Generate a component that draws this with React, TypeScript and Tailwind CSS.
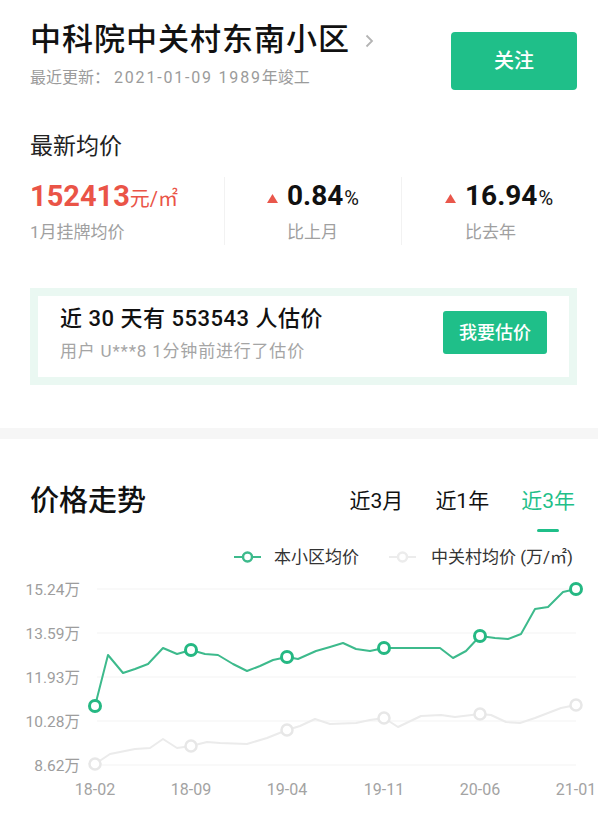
import React from 'react';

const green = '#1fbf89';

// 本小区均价, page coords
const clubPts: [number, number][] = [
  [95, 705], [108, 654], [123, 672], [135, 668], [148, 663], [163, 647], [177, 653], [191, 649],
  [205, 653], [218, 654], [233, 663], [247, 670], [260, 665], [273, 659], [287, 656], [298, 658],
  [316, 650], [330, 646], [343, 642], [356, 648], [370, 650], [384, 647], [398, 647], [412, 647],
  [426, 647], [440, 647], [453, 657], [466, 650], [480, 635], [495, 637], [508, 638], [521, 633],
  [535, 608], [548, 606], [563, 591], [576, 588],
];

// 中关村均价
const areaPts: [number, number][] = [
  [95, 763], [110, 753], [135, 748], [150, 747], [163, 738], [177, 747], [191, 745], [207, 741],
  [220, 742], [247, 743], [267, 737], [287, 729], [300, 725], [315, 718], [330, 723], [356, 722],
  [370, 719], [384, 717], [398, 726], [421, 715], [441, 714], [455, 716], [480, 713], [491, 714],
  [506, 721], [520, 722], [535, 717], [561, 707], [576, 704],
];

const marks = [95, 191, 287, 384, 480, 576];
const yTicks = [
  { y: 588, label: '15.24万' },
  { y: 632, label: '13.59万' },
  { y: 676, label: '11.93万' },
  { y: 720, label: '10.28万' },
  { y: 764, label: '8.62万' },
];
const xTicks = ['18-02', '18-09', '19-04', '19-11', '20-06', '21-01'];

const pick = (pts: [number, number][]) => marks.map((x) => pts.find((p) => p[0] === x)!);

const Triangle: React.FC = () => (
  <svg width="11" height="9" viewBox="0 0 11 9" className="mt-[15px] mr-[9px] shrink-0">
    <polygon points="5.5,0 11,9 0,9" fill="#e9574b" />
  </svg>
);

const LegendIcon: React.FC<{ color: string }> = ({ color }) => (
  <svg width="27" height="12" viewBox="0 0 27 12" className="block">
    <line x1="0" y1="6" x2="27" y2="6" stroke={color} strokeWidth="2" />
    <circle cx="13.5" cy="6" r="4.5" fill="#fff" stroke={color} strokeWidth="2.5" />
  </svg>
);

const PriceChart: React.FC = () => (
  <svg width="598" height="248" viewBox="0 570 598 248" className="block">
    {yTicks.map((t) => (
      <g key={t.label}>
        <line x1="97" y1={t.y} x2="576" y2={t.y} stroke="#f3f3f3" strokeWidth="1" />
        <text x="80" y={t.y + 6} textAnchor="end" fontSize="15.5" fill="#9d9d9d">
          {t.label}
        </text>
      </g>
    ))}
    {xTicks.map((t, i) => (
      <text key={t} x={marks[i]} y={794} textAnchor="middle" fontSize="16" fill="#a3a3a3">
        {t}
      </text>
    ))}
    <polyline
      points={areaPts.map((p) => p.join(',')).join(' ')}
      fill="none"
      stroke="#ebebeb"
      strokeWidth="2"
      strokeLinejoin="round"
    />
    {pick(areaPts).map(([x, y]) => (
      <circle key={x} cx={x} cy={y} r="5.5" fill="#fff" stroke="#e7e7e7" strokeWidth="2.5" />
    ))}
    <polyline
      points={clubPts.map((p) => p.join(',')).join(' ')}
      fill="none"
      stroke="#3dba8c"
      strokeWidth="2"
      strokeLinejoin="round"
    />
    {pick(clubPts).map(([x, y]) => (
      <circle key={x} cx={x} cy={y} r="5.5" fill="#fff" stroke="#25b883" strokeWidth="3" />
    ))}
  </svg>
);

export default function App() {
  return (
    <div className="w-[598px] h-[818px] overflow-hidden bg-white text-[#111] font-['Roboto','Noto_Sans_CJK_SC',sans-serif]">
      <section className="pl-[30px] pr-[21px] pt-[22px]">
        <div className="flex items-start justify-between">
          <div>
            <div className="flex h-[36px] items-center">
              <h1 className="text-[31px] leading-[36px] font-medium tracking-[1px]">中科院中关村东南小区</h1>
              <svg width="9" height="14" viewBox="0 0 9 14" className="ml-[15px] mt-[1px]">
                <polyline points="1.5,1.5 7,7 1.5,12.5" fill="none" stroke="#b4b4b4" strokeWidth="1.8" />
              </svg>
            </div>
            <p className="mt-[9px] text-[16px] leading-[22px] text-[#9b9b9b]">
              最近更新：<span className="ml-[4px] tracking-[1.8px]">2021-01-09 1989</span>年竣工
            </p>
          </div>
          <button
            type="button"
            className="mt-[10px] h-[58px] w-[126px] rounded-[4px] text-[20px] font-medium text-white"
            style={{ backgroundColor: green }}
          >
            关注
          </button>
        </div>

        <h2 className="mt-[42px] text-[23px] leading-[30px] text-[#222]">最新均价</h2>

        <div className="mt-[15px] flex">
          <div className="w-[194px] pt-[2px]">
            <div className="flex h-[34px] items-baseline text-[#ea5447]">
              <span className="text-[29px] font-bold leading-[34px]">152413</span>
              <span className="text-[20px] leading-[34px]">元/㎡</span>
            </div>
            <p className="mt-[7px] text-[17px] leading-[24px] text-[#a0a0a0]">1月挂牌均价</p>
          </div>
          <div className="w-[177px] border-l border-[#f2f2f2] pl-[42px] pt-[2px] pb-[1px]">
            <div className="flex h-[34px] items-start">
              <Triangle />
              <span className="text-[28px] font-bold leading-[34px]">0.84</span>
              <span className="ml-[1px] mt-[5px] text-[20px] leading-[28px]">%</span>
            </div>
            <p className="ml-[20px] mt-[7px] text-[17px] leading-[24px] text-[#a0a0a0]">比上月</p>
          </div>
          <div className="flex-1 border-l border-[#f2f2f2] pl-[43px] pt-[2px] pb-[1px]">
            <div className="flex h-[34px] items-start">
              <Triangle />
              <span className="text-[28px] font-bold leading-[34px]">16.94</span>
              <span className="ml-[1px] mt-[5px] text-[20px] leading-[28px]">%</span>
            </div>
            <p className="ml-[20px] mt-[7px] text-[17px] leading-[24px] text-[#a0a0a0]">比去年</p>
          </div>
        </div>

        <div className="mt-[43px] h-[97px] border-[8px] border-[#eaf8f2] bg-white">
          <div className="flex items-start justify-between pl-[22px] pr-[22px]">
            <div className="pt-[8px]">
              <p className="text-[22px] font-medium leading-[30px] tracking-[0.5px]">近 30 天有 553543 人估价</p>
              <p className="mt-[6px] text-[17px] leading-[22px] tracking-[0.8px] text-[#a5a5a5]">用户 U***8 1分钟前进行了估价</p>
            </div>
            <button
              type="button"
              className="mt-[15px] h-[43px] w-[104px] rounded-[3px] text-[18px] font-medium text-white"
              style={{ backgroundColor: green }}
            >
              我要估价
            </button>
          </div>
        </div>
      </section>

      <div className="mt-[43px] h-[11px] bg-[#f6f6f6]" />

      <section>
        <div className="mt-[44px] flex h-[36px] items-center justify-between pl-[30px] pr-[23px]">
          <h2 className="text-[29px] font-medium leading-[36px]">价格走势</h2>
          <div className="flex items-start gap-[32px] text-[21px] leading-[36px]">
            <span>近3月</span>
            <span>近1年</span>
            <span className="relative" style={{ color: green }}>
              近3年
              <span className="absolute left-1/2 top-[46px] h-[3px] w-[22px] -translate-x-1/2 rounded-full" style={{ backgroundColor: green }} />
            </span>
          </div>
        </div>

        <div className="mt-[26px] flex h-[24px] items-center justify-end pr-[25px] text-[17px] leading-[24px] text-[#333]">
          <LegendIcon color="#3dba8c" />
          <span className="ml-[13px]">本小区均价</span>
          <span className="ml-[30px]">
            <LegendIcon color="#ececec" />
          </span>
          <span className="ml-[15px]">中关村均价 (万/㎡)</span>
        </div>

        <div className="mt-[2px]">
          <PriceChart />
        </div>
      </section>
    </div>
  );
}
